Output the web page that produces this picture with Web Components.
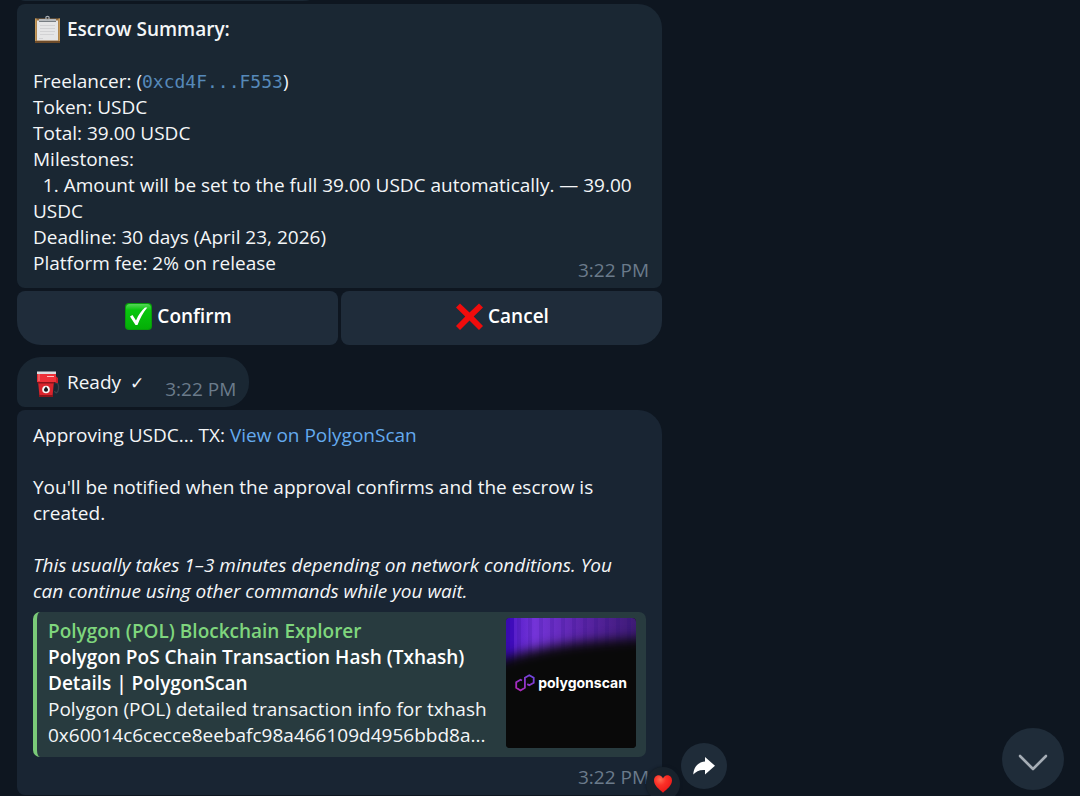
<!DOCTYPE html>
<html lang="en">
<head>
<meta charset="utf-8">
<title>Escrow chat</title>
<style>
  html, body { margin: 0; height: 100%; }
  body {
    background: #0e1620; color: #f4f6f8; overflow: hidden;
    font: 19px/26px "Open Sans", "Noto Sans", sans-serif;
    --bubble: #1a2733; --button: #1f2c3a; --muted: #6b7b8b; --link: #64aaee;
  }
  strong { font-weight: 600; }
  code { font: 18px/20px "DejaVu Sans Mono", monospace; color: #5689b9; }
  a { color: var(--link); text-decoration: none; }
  .tick { margin-left: 4px; font: 17px/20px "DejaVu Sans", sans-serif; }
</style>
</head>
<body>
<chat-feed>
  <chat-message class="previous" compact></chat-message>
  <chat-message time="3:22 PM">
    <p><emoji-icon name="clipboard"></emoji-icon> <strong>Escrow Summary:</strong></p>
    <p><br></p>
    <p>Freelancer: (<code>0xcd4F...F553</code>)</p>
    <p>Token: USDC</p>
    <p>Total: 39.00 USDC</p>
    <p>Milestones:</p>
    <p>&nbsp; 1. Amount will be set to the full 39.00 USDC automatically. — 39.00 USDC</p>
    <p>Deadline: 30 days (April 23, 2026)</p>
    <p>Platform fee: 2% on release</p>
  </chat-message>
  <action-row>
    <action-button side="left"><emoji-icon name="check"></emoji-icon> Confirm</action-button>
    <action-button side="right"><emoji-icon name="cross"></emoji-icon> Cancel</action-button>
  </action-row>
  <chat-message class="ready" compact time="3:22 PM">
    <p><emoji-icon name="pump"></emoji-icon> Ready <span class="tick">✓</span></p>
  </chat-message>
  <chat-message class="last" time="3:22 PM">
    <p>Approving USDC... TX: <a href="#tx">View on PolygonScan</a></p>
    <p><br></p>
    <p>You'll be notified when the approval confirms and the escrow is created.</p>
    <p><br></p>
    <p><em>This usually takes 1–3 minutes depending on network conditions. You can continue using other commands while you wait.</em></p>
    <link-preview>
      <span slot="site">Polygon (POL) Blockchain Explorer</span>
      <span slot="title">Polygon PoS Chain Transaction Hash (Txhash) Details | PolygonScan</span>
      <span slot="text">Polygon (POL) detailed transaction info for txhash 0x60014c6cecce8eebafc98a466109d4956bbd8a...</span>
    </link-preview>
    <message-reaction slot="reaction"></message-reaction>
    <round-button slot="share" label="Share">
      <svg width="24" height="22" viewBox="0 0 24 22"><path fill="#fff" d="M13 2 23 10.800 13 19.600V15C7.500 14.600 4 16.200 1.300 19.600 1.600 12.200 5.800 7.200 13 6.500Z"/></svg>
    </round-button>
  </chat-message>
</chat-feed>
<round-button class="down" large label="Scroll to bottom">
  <svg width="30" height="18" viewBox="0 0 30 18"><path d="M2 3 15 16 28 3" fill="none" stroke="#a5adb5" stroke-width="2.600" stroke-linecap="round" stroke-linejoin="round"/></svg>
</round-button>

<script>
const define = (name, html, setup) => customElements.define(name, class extends HTMLElement {
  connectedCallback() {
    if (this.shadowRoot) return;
    const root = this.attachShadow({ mode: "open" });
    root.innerHTML = html;
    if (setup) setup(this, root);
  }
});

define("chat-feed", `
  <style>
    :host { box-sizing: border-box; display: flex; flex-direction: column; justify-content: flex-end;
      align-items: flex-start; gap: 3px; height: 100vh; padding: 0 17px 1px; overflow: hidden; }
    ::slotted(*) { flex: none; }
    ::slotted(.previous) { width: 310px; }
    ::slotted(.ready) { margin-top: 9px; }
  </style>
  <slot></slot>`);

define("chat-message", `
  <style>
    :host { box-sizing: border-box; display: block; position: relative; width: 100%; max-width: 645px;
      padding: 12px 16px; background: var(--bubble); border-radius: 24px 24px 8px 8px; }
    :host(:not([compact])) { border-top-left-radius: 8px; }
    :host([compact]) { display: flex; align-items: flex-start; gap: 21px; width: auto; height: 50px;
      padding-right: 13px; border-radius: 24px 24px 24px 8px; }
    :host(.last) { padding-bottom: 38px; background: #192533; }
    ::slotted(p) { margin: 0; }
    time { position: absolute; right: 13px; bottom: 5px; color: var(--muted); }
    :host([compact]) time { position: static; margin-top: 7px; }
    .share { position: absolute; left: calc(100% + 19px); bottom: 6px; }
    .reaction { position: absolute; right: -18px; bottom: -6px; }
  </style>
  <slot></slot><time></time>
  <div class="reaction"><slot name="reaction"></slot></div>
  <div class="share"><slot name="share"></slot></div>`,
  (el, root) => {
    root.querySelector("time").textContent = el.getAttribute("time") || "";
    for (const n of ["reaction", "share"])
      if (!el.querySelector(`[slot=${n}]`)) root.querySelector("." + n).remove();
  });

define("action-row", `
  <style>
    :host { display: grid; grid-template-columns: 1fr 1fr; gap: 3px; width: 100%; max-width: 645px; }
  </style>
  <slot></slot>`);

define("action-button", `
  <style>
    :host { display: block; }
    button { display: block; width: 100%; height: 54px; margin: 0; padding: 0 0 4px; border: 0;
      border-radius: 8px; background: var(--button); color: #fff; font: inherit; font-weight: 600; cursor: pointer; }
    :host([side=left]) button { border-bottom-left-radius: 24px; }
    :host([side=right]) button { border-bottom-right-radius: 24px; }
  </style>
  <button type="button"><slot></slot></button>`);

define("round-button", `
  <style>
    :host { display: block; }
    :host(.down) { position: fixed; right: 16px; bottom: 6px; }
    button { display: flex; align-items: center; justify-content: center; width: 46px; height: 46px;
      margin: 0; padding: 0; border: 0; border-radius: 50%; background: #1f2c39; cursor: pointer; }
    :host([large]) button { width: 62px; height: 62px; padding-top: 6px; }
    ::slotted(svg) { display: block; }
  </style>
  <button type="button"><slot></slot></button>`,
  (el, root) => root.querySelector("button").setAttribute("aria-label", el.getAttribute("label")));

define("message-reaction", `
  <style>
    :host { display: block; }
    button { display: flex; align-items: center; justify-content: center; width: 34px; height: 34px; margin: 0;
      padding: 0; border: 0; border-radius: 50%; background: #18222c; box-shadow: 0 0 3px #0e1620; cursor: pointer; }
  </style>
  <button type="button" aria-label="Heart reaction">
    <svg width="18" height="18" viewBox="0 0 18 18">
      <defs><radialGradient id="h" cx=".35" cy=".25" r=".8"><stop offset="0" stop-color="#ff6a50"/><stop offset=".4" stop-color="#fb3027"/><stop offset="1" stop-color="#e81616"/></radialGradient></defs>
      <path fill="url(#h)" d="M9 17.800C5 14.300 0 10.500 0 5.600 0 2.400 2 .3 4.600.3 6.700.3 8.300 1.600 9 3.500 9.700 1.600 11.300.3 13.400.3 16 .3 18 2.400 18 5.600c0 4.900-5 8.700-9 12.200Z"/>
    </svg>
  </button>`);

define("link-preview", `
  <style>
    :host { display: flex; gap: 12px; margin-top: 8px; padding: 6px 10px 9px 11px; overflow: hidden;
      border-left: 4px solid #7aca78; border-radius: 7px; background: #283b3f; }
    .body { flex: 1; min-width: 0; margin-right: -4px; }
    .body div { overflow-wrap: anywhere; }
    .site { color: #7fd67d; font-weight: 600; }
    .title { color: #fff; font-weight: 600; }
    .card { flex: none; display: flex; align-items: center; justify-content: center; gap: 3px;
      width: 130px; height: 130px; border-radius: 4px; position: relative; overflow: hidden; background: #090909; }
    .glow { position: absolute; inset: 0; }
    .logo, .card span { position: relative; }
    .card span { color: #fff; font: 700 14px/20px Inter, sans-serif; }
  </style>
  <div class="body">
    <div class="site"><slot name="site"></slot></div>
    <div class="title"><slot name="title"></slot></div>
    <div><slot name="text"></slot></div>
  </div>
  <div class="card">
    <svg class="glow" width="130" height="130" viewBox="0 0 130 130" aria-hidden="true">
      <defs>
        <linearGradient id="g"><stop offset="0" stop-color="#4c16c4"/><stop offset=".22" stop-color="#7434d8"/><stop offset=".6" stop-color="#5a24a6"/><stop offset="1" stop-color="#3e1b75"/></linearGradient>
        <filter id="b" x="-30%" y="-30%" width="160%" height="160%" color-interpolation-filters="sRGB"><feGaussianBlur stdDeviation="6"/></filter>
        <pattern id="s" width="11" height="130" patternUnits="userSpaceOnUse"><path fill="#24087a" fill-opacity=".15" d="M0 0h4v130H0z"/></pattern>
      </defs>
      <path fill="url(#g)" d="M0 0h130v75H0z"/>
      <path fill="#3605b5" fill-opacity=".7" d="M0 0h8v75H0z"/>
      <path fill="url(#s)" d="M0 0h130v75H0z"/>
      <path fill="#090909" filter="url(#b)" d="M-30 52C20 28 70 22 160 19V170H-30Z"/>
    </svg>
    <svg class="logo" width="20" height="18" viewBox="0 0 20 18" aria-hidden="true">
      <defs><linearGradient id="p" x1="0" y1="1" x2="1" y2="0"><stop offset="0" stop-color="#b326b5"/><stop offset="1" stop-color="#6b47e0"/></linearGradient></defs>
      <path fill="none" stroke="url(#p)" stroke-width="1.800" d="M7 6.500 5.500 5.700 1.200 8.200V13.800L5.500 16.400 9.900 13.800V3.700L14.300 1.200 18.700 3.700V8.700L14.300 11.300 12.200 10.100"/>
    </svg>
    <span>polygonscan</span>
  </div>`);

const EMOJI = {
  clipboard: `<path fill="#9a7040" d="M2 3.500h25V28H2z"/><path fill="#6f4c2a" d="M2 26h25v2H2z"/><path fill="#c59b5c" d="M2 3.500h1.500V26H2zM25.500 3.500H27V26h-1.500z"/><path fill="#e5e5e6" d="M4 5.500h21V25.500H4z"/><path stroke="#d2d2d4" d="M7 10.500h15M7 13.500h15M7 16.500h15M7 19.500h14M6 23.500h4"/><path fill="#b7babd" d="M6 4h17v2.500H6z"/><path fill="#777d82" d="M6 6h17v1H6z"/><circle cx="14.500" cy="3" r="1.700" fill="none" stroke="#a9adb1" stroke-width="1.200"/>`,
  check: `<defs><linearGradient id="c" x2="0" y2="1"><stop stop-color="#55d657"/><stop offset=".25" stop-color="#08c60d"/><stop offset="1" stop-color="#04ae07"/></linearGradient></defs><g transform="translate(2)"><rect x="0" y="1" width="27" height="27" rx="4" fill="#079d0a"/><rect x="1" y="2" width="25" height="25" rx="4" fill="url(#c)"/><path d="M5 14.500 7.500 13l3.500 5.500C13.500 12.500 16.500 8.500 20 5.500H22.300C18 10.500 15 16.500 12.500 23H10.500Z" fill="#fff"/></g>`,
  cross: `<path transform="translate(2)" d="m0 5.500 4-4L13.500 10.500 23 1.500l4 4L17.700 14.500l9.300 9.500-4 4L13.500 18.500 4 28l-4-4L9.300 14.500Z" fill="#f00c0c"/>`,
  pump: `<path fill="none" stroke="#39414a" stroke-width="1.300" d="M22 15c3-1 4 2 3.500 6s-3 5-4 2"/><path fill="#c92028" d="M22 7.500 25 10v5h-2.500V12H20Z"/><path fill="#d9242c" d="m5 13 1.500 15.500H19.500L21 13Z"/><path fill="#8c141b" d="M6 27h14v2H6zM4.500 14h17v1.500h-17z"/><path fill="#ee3038" d="M4 5h19v9H4z"/><path fill="#f25c60" d="M5 6h2v7H5z"/><path fill="#dadde0" d="M4 3.500h19V6H4z"/><path stroke="#ffc0c0" d="M14 8.500h7"/><circle cx="13" cy="21.500" r="3.800" fill="#f4f4f4"/><path fill="#15181b" d="M13 18.500q4 4.500 0 5.300-4-.8 0-5.300Z"/>`
};
define("emoji-icon", `
  <style>
    :host { display: inline-block; width: 29px; height: 26px; vertical-align: top; }
    svg { display: block; margin-top: -1px; overflow: visible; }
  </style>
  <svg width="28" height="30" viewBox="0 0 28 30" role="img"></svg>`,
  (el, root) => {
    const svg = root.querySelector("svg");
    svg.setAttribute("aria-label", el.getAttribute("name"));
    svg.innerHTML = EMOJI[el.getAttribute("name")];
  });
</script>
</body>
</html>
